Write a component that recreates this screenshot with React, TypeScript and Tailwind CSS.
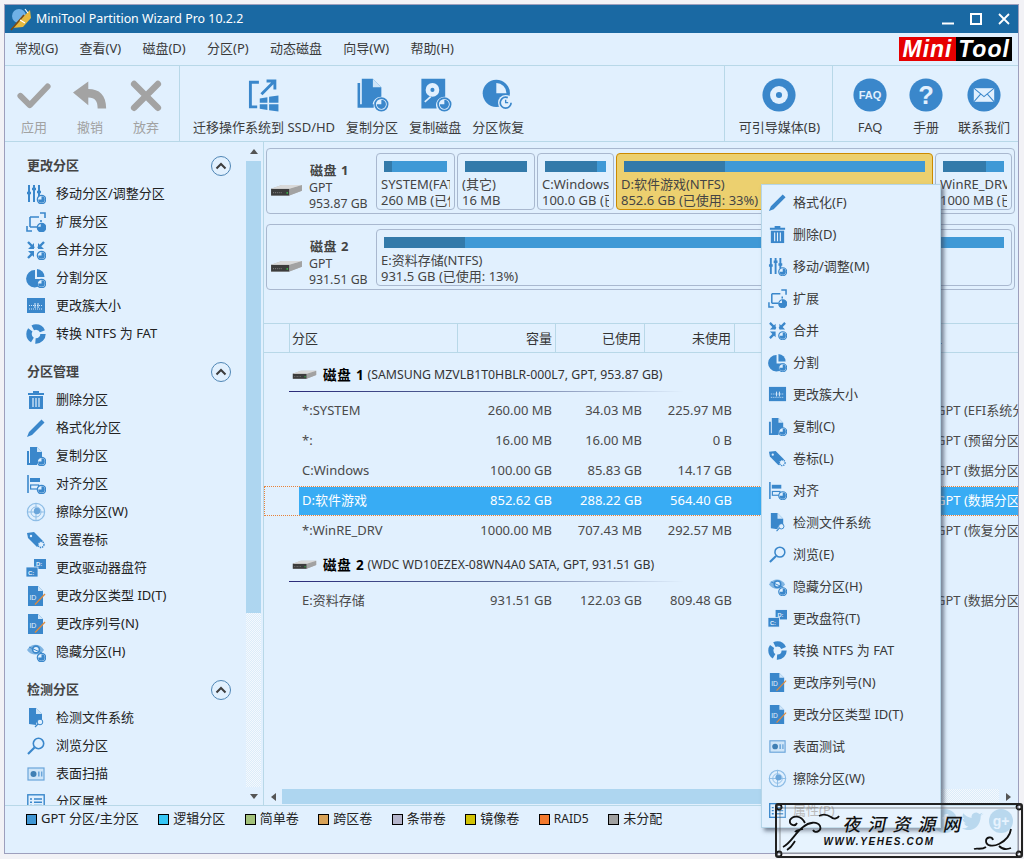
import React from 'react';

const B = '#3a87cb';

function Badge() {
  return (
    <g>
      <circle cx="15.5" cy="15.5" r="4.2" fill="#e1f0fe" stroke={B} strokeWidth="1.2" />
      <path d="M15.5 15.5V12.2A3.3 3.3 0 1 1 12.2 15.5Z" fill={B} />
    </g>
  );
}

function Icon({ name, size = 20 }: { name: string; size?: number }) {
  let body: React.ReactNode = null;
  switch (name) {
    case 'sliders':
      body = (
        <g>
          <path d="M3 1v17M8 1v17M13 1v11" stroke={B} strokeWidth="2" />
          <path d="M1 9h4M6 5h4M11 8h4" stroke={B} strokeWidth="2.6" />
          <Badge />
        </g>
      );
      break;
    case 'expand':
      body = (
        <g fill="none" stroke={B} strokeWidth="1.6">
          <path d="M4 5h9M4 5v10M4 15h7M15 8v2" />
          <path d="M14 1h5v5M1 14v5h5" />
          <Badge />
        </g>
      );
      break;
    case 'merge':
      body = (
        <g>
          <path d="M2 2l6 6M18 2l-6 6M2 18l5-5" stroke={B} strokeWidth="2.4" />
          <path d="M8 3v6H2zM12 3v6h6zM8 17v-6H2z" fill={B} />
          <Badge />
        </g>
      );
      break;
    case 'pie':
      body = (
        <g>
          <path d="M9 2v9h8.5A8.7 8.7 0 1 1 9 2Z" fill={B} />
          <path d="M11 1a8 8 0 0 1 7.5 8H11Z" fill={B} />
          <Badge />
        </g>
      );
      break;
    case 'cluster':
      body = (
        <g>
          <rect x="1" y="2" width="18" height="15" fill={B} />
          <path d="M3 9.5h14M3 13h14" stroke="#cfe5f8" strokeWidth="1" strokeDasharray="1 1" />
          <path d="M9 7v5M12 7v5" stroke="#e1f0fe" strokeWidth="1" />
        </g>
      );
      break;
    case 'recycle':
      body = (
        <g>
          <circle cx="10" cy="10" r="7" fill="none" stroke={B} strokeWidth="5.4" strokeDasharray="11.5 3.2" />
          <path d="M10 7l3 5H7z" fill="#e1f0fe" />
        </g>
      );
      break;
    case 'trash':
      body = (
        <g>
          <path d="M7 1h6v2h5v2H2V3h5z" fill={B} />
          <path d="M3 6h14v13H3z" fill={B} />
          <path d="M7 8v9M10 8v9M13 8v9" stroke="#e1f0fe" strokeWidth="1.2" />
        </g>
      );
      break;
    case 'pencil':
      body = <path d="M15.5 1.5l3 3L6 17l-5 2 2-5zM14 3l3 3" fill={B} />;
      break;
    case 'copy':
      body = (
        <g>
          <path d="M4 1h7l5 5v6a5 5 0 0 0-5 6H4z" fill={B} />
          <path d="M1 5h2v12h8v2H1z" fill={B} />
          <path d="M11 1v5h5" fill="#cfe5f8" />
          <Badge />
        </g>
      );
      break;
    case 'align':
      body = (
        <g>
          <path d="M2 1v18" stroke={B} strokeWidth="1.6" />
          <rect x="4" y="4" width="10" height="4" fill={B} />
          <rect x="4.6" y="11" width="8" height="4" fill="none" stroke={B} strokeWidth="1.2" />
          <Badge />
        </g>
      );
      break;
    case 'wipe':
      body = (
        <g fill="none" stroke="#8dbde6">
          <circle cx="10" cy="10" r="8.6" strokeWidth="1.2" />
          <circle cx="10" cy="10" r="5" />
          <path d="M1 10h18M10 1v18" />
          <circle cx="11" cy="9" r="3.2" fill="#6aa5da" stroke="none" />
        </g>
      );
      break;
    case 'tag':
      body = (
        <g>
          <path d="M1 3l7-1 9 9-6 6-9-9z" fill={B} />
          <circle cx="5" cy="6" r="1.2" fill="#e1f0fe" />
          <circle cx="15" cy="14.5" r="3" fill="#e1f0fe" stroke={B} strokeWidth="1.4" strokeDasharray="1.4 .8" />
        </g>
      );
      break;
    case 'drive':
      body = (
        <g>
          <rect x="8" y="1" width="12" height="10" fill={B} />
          <rect x="0" y="9" width="12" height="10" fill={B} stroke="#e1f0fe" strokeWidth=".8" />
          <text x="10" y="8" fontSize="6" fontWeight="700" fill="#e1f0fe" fontFamily="Liberation Sans">D:</text>
          <text x="2" y="16.5" fontSize="6" fontWeight="700" fill="#e1f0fe" fontFamily="Liberation Sans">C:</text>
        </g>
      );
      break;
    case 'id':
      body = (
        <g>
          <path d="M2 0h10l5 5v15H2z" fill={B} />
          <path d="M12 0v5h5z" fill="#cfe5f8" />
          <text x="3.4" y="14" fontSize="7" fill="#e1f0fe" fontFamily="Liberation Sans">ID</text>
          <path d="M9 18.5L19 8" stroke="#e08a3c" strokeWidth="1.3" />
        </g>
      );
      break;
    case 'eye':
      body = (
        <g>
          <path d="M1 8c4-7 13-7 17 0-4 6-13 6-17 0z" fill="#7fb4e2" />
          <circle cx="10" cy="7.5" r="3.4" fill="#e1f0fe" stroke={B} strokeWidth="1.6" />
          <path d="M3 5l13 6" stroke={B} strokeWidth="1" />
          <Badge />
        </g>
      );
      break;
    case 'docsearch':
      body = (
        <g>
          <path d="M3 0h7l6 6v6a5 5 0 0 0-6 5l-7-1z" fill={B} />
          <path d="M10 0v6h6z" fill="#cfe5f8" />
          <circle cx="14" cy="14" r="2.8" fill="#e1f0fe" stroke={B} />
          <path d="M12 16l-3 3" stroke={B} strokeWidth="1.2" />
        </g>
      );
      break;
    case 'search':
      body = (
        <g fill="none" stroke={B}>
          <circle cx="12.5" cy="7.5" r="5.2" strokeWidth="1.6" />
          <path d="M8.5 11.5L2 18" strokeWidth="2.2" />
        </g>
      );
      break;
    case 'surface':
      body = (
        <g>
          <rect x="2" y="4" width="16" height="12" fill="#cfe5f8" stroke="#6aa5da" strokeWidth="1.2" />
          <circle cx="7.5" cy="10" r="3" fill="#3f7fb4" />
          <path d="M12 7.5h1.6v5H12zM15 7.5h1.4v5H15z" fill="#6aa5da" />
        </g>
      );
      break;
    case 'props':
      body = (
        <g>
          <rect x="1.8" y="2.8" width="16.4" height="14.4" fill="none" stroke={B} strokeWidth="1.4" />
          <path d="M4 7h2M8 7h8M4 10.2h2M8 10.2h8M4 13.4h2M8 13.4h8" stroke={B} strokeWidth="1.4" />
        </g>
      );
      break;
  }
  return (
    <svg width={size} height={size} viewBox="0 0 20 20" className="shrink-0">
      {body}
    </svg>
  );
}

function ToolIcon({ name }: { name: string }) {
  const g = '#a3a3a3';
  let body: React.ReactNode = null;
  const clock = (
    <g>
      <circle cx="31" cy="31" r="7.4" fill="#e1f0fe" stroke={B} strokeWidth="2" />
      <path d="M31 31v-5.4A5.4 5.4 0 1 1 25.6 31Z" fill={B} />
    </g>
  );
  switch (name) {
    case 'apply':
      body = <path d="M4 21l11 11L36 10" fill="none" stroke={g} strokeWidth="7" strokeLinecap="round" strokeLinejoin="round" />;
      break;
    case 'undo':
      body = <path d="M0 17L18 4v9c13 0 21 7 21 23H29c0-9-3-13-11-13v9z" fill={g} />;
      break;
    case 'discard':
      body = <path d="M6 7l28 28M34 7L6 35" stroke={g} strokeWidth="7.5" strokeLinecap="round" />;
      break;
    case 'migrate':
      body = (
        <g>
          <path d="M14 5H4v29h8" fill="none" stroke={B} strokeWidth="3.4" />
          <path d="M17 19L31 5M23 3.6h9.8v9.8" fill="none" stroke={B} strokeWidth="3.4" />
          <path d="M15 24l9-1.4V29h-9zM26 22.2l11-1.7V29H26zM15 31h9v6.5l-9-1.3zM26 31h11v8.5l-11-1.6z" fill={B} />
        </g>
      );
      break;
    case 'copyPart':
      body = (
        <g>
          <path d="M8 1h13l10 10v11a10 10 0 0 0-10 12H8z" fill={B} />
          <path d="M21 1v10h10z" fill="#cfe5f8" />
          <path d="M3 6h3v25h16v4H3z" fill={B} />
          {clock}
        </g>
      );
      break;
    case 'copyDisk':
      body = (
        <g>
          <path d="M4 1h28v21a10 10 0 0 0-10 14H4z" fill={B} />
          <circle cx="17" cy="14" r="8" fill="#e1f0fe" />
          <circle cx="17" cy="14" r="2.4" fill={B} />
          <path d="M8 28l7-6" stroke="#e1f0fe" strokeWidth="2" />
          {clock}
        </g>
      );
      break;
    case 'restore':
      body = (
        <g>
          <circle cx="18" cy="18" r="16" fill={B} />
          <path d="M18 6v12h12A12 12 0 0 0 18 6Z" fill="#e1f0fe" />
          <circle cx="29" cy="29" r="9" fill="#e1f0fe" />
          <circle cx="29" cy="29" r="6.4" fill="none" stroke={B} strokeWidth="2" strokeDasharray="32 8" />
          <path d="M29 25.5V29h3" fill="none" stroke={B} strokeWidth="1.6" />
        </g>
      );
      break;
    case 'media':
      body = (
        <g>
          <circle cx="20" cy="20" r="19.5" fill={B} />
          <circle cx="20" cy="20" r="10.5" fill="#e1f0fe" />
          <circle cx="20" cy="20" r="3.6" fill={B} />
        </g>
      );
      break;
    case 'faq':
      body = (
        <g>
          <circle cx="20" cy="20" r="19.5" fill={B} />
          <text x="20" y="24.5" textAnchor="middle" fontSize="13" fontWeight="700" fill="#e1f0fe" fontFamily="Liberation Sans">FAQ</text>
        </g>
      );
      break;
    case 'help':
      body = (
        <g>
          <circle cx="20" cy="20" r="19.5" fill={B} />
          <text x="20" y="31" textAnchor="middle" fontSize="30" fontWeight="700" fill="#e1f0fe" fontFamily="Liberation Sans">?</text>
        </g>
      );
      break;
    case 'mail':
      body = (
        <g>
          <circle cx="20" cy="20" r="19.5" fill={B} />
          <rect x="8" y="12" width="24" height="16" fill="#e1f0fe" />
          <path d="M8 12l12 10 12-10M8 28l8-9M32 28l-8-9" fill="none" stroke={B} strokeWidth="1.2" />
        </g>
      );
      break;
  }
  return (
    <svg width="34" height="34" viewBox="0 0 40 40" className="shrink-0">
      {body}
    </svg>
  );
}

function Hdd({ w = 34 }: { w?: number }) {
  return (
    <svg width={w} height={w * 0.38} viewBox="0 0 34 13" className="shrink-0">
      <path d="M1 5L12 1h21v6L20 12H1z" fill="#b9b9b9" />
      <path d="M1 5h19v7H1z" fill="#3c3c3c" />
      <path d="M20 5L33 1v6L20 12z" fill="#a2a2a2" />
      <path d="M1 5L12 1h21L20 5z" fill="#d9d9d9" />
      <path d="M3 9h9" stroke="#888" strokeDasharray="1 1" />
      <rect x="17" y="8.5" width="1.5" height="1.5" fill="#37d14a" />
    </svg>
  );
}

function Chevron() {
  return (
    <span className="flex h-[20px] w-[20px] items-center justify-center rounded-full border border-[#4f86b5]">
      <svg width="12" height="8" viewBox="0 0 12 8">
        <path d="M1.5 6.5L6 2l4.5 4.5" fill="none" stroke="#3d3d3d" strokeWidth="2" />
      </svg>
    </span>
  );
}

const sections = [
  {
    title: '更改分区',
    items: [
      ['sliders', '移动分区/调整分区'],
      ['expand', '扩展分区'],
      ['merge', '合并分区'],
      ['pie', '分割分区'],
      ['cluster', '更改簇大小'],
      ['recycle', '转换 NTFS 为 FAT'],
    ],
  },
  {
    title: '分区管理',
    items: [
      ['trash', '删除分区'],
      ['pencil', '格式化分区'],
      ['copy', '复制分区'],
      ['align', '对齐分区'],
      ['wipe', '擦除分区(W)'],
      ['tag', '设置卷标'],
      ['drive', '更改驱动器盘符'],
      ['id', '更改分区类型 ID(T)'],
      ['id', '更改序列号(N)'],
      ['eye', '隐藏分区(H)'],
    ],
  },
  {
    title: '检测分区',
    items: [
      ['docsearch', '检测文件系统'],
      ['search', '浏览分区'],
      ['surface', '表面扫描'],
      ['props', '分区属性'],
    ],
  },
];

const menuItems = [
  ['pencil', '格式化(F)'],
  ['trash', '删除(D)'],
  ['sliders', '移动/调整(M)'],
  ['expand', '扩展'],
  ['merge', '合并'],
  ['pie', '分割'],
  ['cluster', '更改簇大小'],
  ['copy', '复制(C)'],
  ['tag', '卷标(L)'],
  ['align', '对齐'],
  ['docsearch', '检测文件系统'],
  ['search', '浏览(E)'],
  ['eye', '隐藏分区(H)'],
  ['drive', '更改盘符(T)'],
  ['recycle', '转换 NTFS 为 FAT'],
  ['id', '更改序列号(N)'],
  ['id', '更改分区类型 ID(T)'],
  ['surface', '表面测试'],
  ['wipe', '擦除分区(W)'],
  ['props', '属性(P)'],
];

const legend = [
  ['bg-[#3f96d4]', 'GPT 分区/主分区'],
  ['bg-[#35c6f5]', '逻辑分区'],
  ['bg-[#a3c27a]', '简单卷'],
  ['bg-[#d8a257]', '跨区卷'],
  ['bg-[#b5b5cb]', '条带卷'],
  ['bg-[#d2c305]', '镜像卷'],
  ['bg-[#f47a2e]', 'RAID5'],
  ['bg-[#a0a0a0]', '未分配'],
];

function ToolItem({ icon, label, muted, className = '' }: { icon: string; label: string; muted?: boolean; className?: string }) {
  return (
    <div className={`flex flex-col items-center pt-[12px] ${className}`}>
      <ToolIcon name={icon} />
      <span className={`mt-[6px] whitespace-nowrap text-[13px] leading-[18px] ${muted ? 'text-[#a2a2a2]' : 'text-[#3c3c3c]'}`}>{label}</span>
    </div>
  );
}

function Part({
  label,
  sub,
  used,
  className,
  selected,
}: {
  label: string;
  sub: string;
  used: string;
  className: string;
  selected?: boolean;
}) {
  return (
    <div
      className={`h-[57px] rounded-[4px] border px-[4px] pt-[7px] ${className} ${
        selected ? 'border-[#cc8a00] bg-[#ecd06f]' : 'border-[#a9b8cf] bg-[#e1f0fe]'
      }`}
    >
      <div className="mx-[3px] h-[11px] bg-[#3f99d6]">
        <div className={`h-full bg-[#337aaa] ${used}`} />
      </div>
      <div className="mt-[4px] overflow-hidden whitespace-nowrap text-[13px] leading-[16px] text-[#444]">{label}</div>
      <div className="overflow-hidden whitespace-nowrap text-[13px] leading-[16px] text-[#444]">{sub}</div>
    </div>
  );
}

function DiskInfo({ name, size }: { name: string; size: string }) {
  return (
    <div className="flex w-[109px] shrink-0 pl-[3px] pt-[9px]">
      <div className="mt-[22px] w-[39px]">
        <Hdd w={33} />
      </div>
      <div className="text-[#444]">
        <div className="ml-px text-[13px] font-bold leading-[16px] tracking-[0.5px]">{name}</div>
        <div className="mt-[2px] text-[12.3px] leading-[16px]">GPT</div>
        <div className="whitespace-nowrap text-[12.3px] leading-[16px]">{size}</div>
      </div>
    </div>
  );
}

function DiskRow({ text, name }: { name: string; text: string }) {
  return (
    <div className="relative flex h-[30px] items-center pl-[28px] text-[13px] text-[#333]">
      <Hdd w={25} />
      <span className="ml-[6px] text-[13.5px] font-bold tracking-[0.8px] text-black">{name}</span>
      <span className="ml-[3px] whitespace-nowrap text-[12.3px]">{text}</span>
      <div className="absolute -bottom-[2px] left-[25px] h-px w-[395px] bg-gradient-to-r from-[#2b2a78] via-[#5a6a98] to-transparent" />
    </div>
  );
}

function PartRow({ cells, selected }: { cells: string[]; selected?: boolean }) {
  const text = selected ? 'text-white' : 'text-[#4a4a4a]';
  return (
    <div
      className={`flex h-[30px] items-center text-[13px] ${text} ${
        selected ? 'border border-dotted border-[#e8823a]' : ''
      }`}
    >
      <div className={`flex h-full w-full items-center ${selected ? 'ml-[34px] bg-[#38acf4]' : 'ml-[35px]'}`}>
        <div className="w-[133px] shrink-0 pl-[3px]">{cells[0]}</div>
        <div className="w-[120px] shrink-0 text-right">{cells[1]}</div>
        <div className="w-[90px] shrink-0 text-right">{cells[2]}</div>
        <div className="w-[90px] shrink-0 text-right">{cells[3]}</div>
        <div className="ml-[204px] whitespace-nowrap">{cells[4]}</div>
      </div>
    </div>
  );
}

export default function App() {
  return (
    <div className="relative h-[859px] w-[1024px] overflow-hidden bg-[#f2f2f6] pb-[5px] pl-[4px] pr-[5px] pt-[4px] font-['Noto_Sans','Noto_Sans_CJK_SC',sans-serif]">
      <div className="flex h-full flex-col border border-[#9d9fbd] bg-[#e1f0fe]">
        {/* title bar */}
        <div className="flex h-[28px] shrink-0 items-center bg-[#1a69a3] pl-[5px]">
          <svg width="22" height="24" viewBox="0 0 22 24" className="shrink-0">
            <circle cx="9" cy="9" r="7" fill="#6fb1e6" />
            <path d="M2 21L20 3l1 8-8 9z" fill="#e7b93e" />
            <path d="M1 23L14 8" stroke="#7a4a12" strokeWidth="1.6" />
            <path d="M15 2l3 4M10 13l5 3" stroke="#fff" strokeWidth="1.2" />
          </svg>
          <span className="ml-[4px] whitespace-nowrap text-[12.4px] text-white">MiniTool Partition Wizard Pro 10.2.2</span>
          <div className="ml-auto mr-[8px] flex items-center gap-[16px]">
            <svg width="12" height="12" viewBox="0 0 12 12"><path d="M0 10.5h12" stroke="#fff" strokeWidth="2" /></svg>
            <svg width="12" height="12" viewBox="0 0 12 12"><rect x="1" y="1" width="10" height="10" fill="none" stroke="#fff" strokeWidth="2" /></svg>
            <svg width="12" height="12" viewBox="0 0 12 12"><path d="M1 1l10 10M11 1L1 11" stroke="#fff" strokeWidth="1.8" /></svg>
          </div>
        </div>

        {/* menu bar */}
        <div className="flex h-[33px] shrink-0 items-center gap-[21.3px] border-b border-[#b8d8e8] pl-[10px] text-[13px] text-[#3a3a3a]">
          <span>常规(G)</span>
          <span>查看(V)</span>
          <span>磁盘(D)</span>
          <span>分区(P)</span>
          <span>动态磁盘</span>
          <span>向导(W)</span>
          <span>帮助(H)</span>
          <div className="ml-auto mr-[6px] flex h-[24px] w-[113px] overflow-hidden font-['Liberation_Sans',sans-serif] text-[23px] font-bold italic leading-[24px] tracking-[1px] text-white">
            <span className="w-[57px] bg-[#e60000] text-center">Mini</span>
            <span className="w-[56px] bg-black text-center">Tool</span>
          </div>
        </div>

        {/* toolbar */}
        <div className="flex h-[76px] shrink-0 border-b border-[#b8d8e8]">
          <div className="flex w-[175px] shrink-0 border-r border-[#b8d8e8] pl-px">
            <ToolItem className="w-[56px]" icon="apply" label="应用" muted />
            <ToolItem className="w-[56px]" icon="undo" label="撤销" muted />
            <ToolItem className="w-[56px]" icon="discard" label="放弃" muted />
          </div>
          <div className="flex w-[545px] shrink-0 gap-[11px] border-r border-[#b8d8e8] pl-[13px]">
            <ToolItem icon="migrate" label="迁移操作系统到 SSD/HD" />
            <ToolItem icon="copyPart" label="复制分区" />
            <ToolItem icon="copyDisk" label="复制磁盘" />
            <ToolItem icon="restore" label="分区恢复" />
          </div>
          <div className="flex w-[108px] shrink-0 justify-center border-r border-[#b8d8e8] pl-[2px]">
            <ToolItem icon="media" label="可引导媒体(B)" />
          </div>
          <div className="flex flex-1 pl-[9px]">
            <ToolItem className="w-[56px]" icon="faq" label="FAQ" />
            <ToolItem className="w-[56px]" icon="help" label="手册" />
            <ToolItem className="ml-[2px] w-[56px]" icon="mail" label="联系我们" />
          </div>
        </div>

        {/* main */}
        <div className="flex min-h-0 flex-1">
          {/* sidebar */}
          <div className="flex w-[258px] shrink-0 pr-[2px]">
            <div className="min-w-0 flex-1 overflow-hidden pt-[10px]">
              {sections.map((s) => (
                <div key={s.title} className="mb-[10px]">
                  <div className="flex h-[28px] items-center justify-between pl-[22px] pr-[15px]">
                    <span className="text-[13px] font-bold text-[#444]">{s.title}</span>
                    <Chevron />
                  </div>
                  {s.items.map(([icon, label]) => (
                    <div key={label} className="flex h-[28px] items-center pl-[21px] text-[13px] text-[#222]">
                      <Icon name={icon} size={20} />
                      <span className="ml-[10px] whitespace-nowrap">{label}</span>
                    </div>
                  ))}
                </div>
              ))}
            </div>
            <div className="flex w-[15px] shrink-0 flex-col items-center">
              <div className="flex h-[19px] shrink-0 items-center justify-center">
                <div className="h-0 w-0 border-x-[4px] border-b-[5px] border-x-transparent border-b-[#555]" />
              </div>
              <div className="h-[452px] w-full shrink-0 bg-[#aed6f0]" />
              <div className="w-full flex-1 bg-[repeating-conic-gradient(#f4f9fe_0_25%,#dcecf9_0_50%)] bg-[length:2px_2px]" />
              <div className="flex h-[18px] shrink-0 items-center justify-center">
                <div className="h-0 w-0 border-x-[4px] border-t-[5px] border-x-transparent border-t-[#555]" />
              </div>
            </div>
          </div>

          {/* content */}
          <div className="flex min-w-0 flex-1 flex-col border-l border-[#b8d8e8]">
            <div className="h-[181px] shrink-0 pl-[2px] pr-[3px] pt-[6px]">
              <div className="flex h-[66px] rounded-[4px] border border-[#a9b8cf] py-[4px] pr-[2px]">
                <DiskInfo name="磁盘 1" size="953.87 GB" />
                <div className="flex min-w-0 flex-1 gap-[2px]">
                  <Part className="w-[79px]" label="SYSTEM(FAT32)" sub="260 MB (已使用: 13%)" used="w-[13%]" />
                  <Part className="w-[78px]" label="(其它)" sub="16 MB" used="w-full" />
                  <Part className="w-[77px]" label="C:Windows(NTFS)" sub="100.0 GB (已使用: 85%)" used="w-[86%]" />
                  <Part className="w-[317px]" label="D:软件游戏(NTFS)" sub="852.6 GB (已使用: 33%)" used="w-[33.7%]" selected />
                  <Part className="min-w-0 flex-1" label="WinRE_DRV(NTFS)" sub="1000 MB (已使用: 70%)" used="w-[71%]" />
                </div>
              </div>
              <div className="mt-[10px] flex h-[66px] rounded-[4px] border border-[#a9b8cf] py-[4px] pr-[2px]">
                <DiskInfo name="磁盘 2" size="931.51 GB" />
                <Part className="min-w-0 flex-1" label="E:资料存储(NTFS)" sub="931.5 GB (已使用: 13%)" used="w-[13%]" />
              </div>
            </div>

            {/* table */}
            <div className="flex h-[30px] shrink-0 items-stretch border-y border-[#b8d8e8] pt-[2px] text-[13px] text-[#333]">
              <div className="-mt-[2px] w-[26px] border-r border-[#b8d8e8]" />
              <div className="-mt-[2px] flex w-[168px] items-center border-r border-[#b8d8e8] pl-[2px] pt-[2px]">分区</div>
              <div className="-mt-[2px] flex w-[98px] items-center justify-end border-r border-[#b8d8e8] pr-[3px] pt-[2px]">容量</div>
              <div className="-mt-[2px] flex w-[89px] items-center justify-end border-r border-[#b8d8e8] pr-[3px] pt-[2px]">已使用</div>
              <div className="-mt-[2px] flex w-[90px] items-center justify-end border-r border-[#b8d8e8] pr-[3px] pt-[2px]">未使用</div>
              <div className="flex w-[207px] items-center justify-end overflow-hidden">类型</div>
            </div>
            <div className="min-h-0 flex-1 overflow-hidden pt-[6px]">
              <div className="h-px" />
              <DiskRow name="磁盘 1" text="(SAMSUNG MZVLB1T0HBLR-000L7, GPT, 953.87 GB)" />
              <div className="h-[6px]" />
              <PartRow cells={['*:SYSTEM', '260.00 MB', '34.03 MB', '225.97 MB', 'GPT (EFI系统分区)']} />
              <PartRow cells={['*:', '16.00 MB', '16.00 MB', '0 B', 'GPT (预留分区)']} />
              <PartRow cells={['C:Windows', '100.00 GB', '85.83 GB', '14.17 GB', 'GPT (数据分区)']} />
              <PartRow cells={['D:软件游戏', '852.62 GB', '288.22 GB', '564.40 GB', 'GPT (数据分区)']} selected />
              <PartRow cells={['*:WinRE_DRV', '1000.00 MB', '707.43 MB', '292.57 MB', 'GPT (恢复分区)']} />
              <div className="h-[4px]" />
              <DiskRow name="磁盘 2" text="(WDC WD10EZEX-08WN4A0 SATA, GPT, 931.51 GB)" />
              <div className="h-[6px]" />
              <PartRow cells={['E:资料存储', '931.51 GB', '122.03 GB', '809.48 GB', 'GPT (数据分区)']} />
            </div>
            <div className="mb-px flex h-[15px] shrink-0 items-center">
              <div className="flex w-[18px] shrink-0 justify-center">
                <div className="h-0 w-0 border-y-[4px] border-r-[5px] border-y-transparent border-r-[#555]" />
              </div>
              <div className="h-full w-[600px] shrink-0 bg-[#aed6f0]" />
              <div className="h-full flex-1 bg-[repeating-conic-gradient(#f4f9fe_0_25%,#dcecf9_0_50%)] bg-[length:2px_2px]" />
              <div className="flex w-[19px] shrink-0 justify-center">
                <div className="h-0 w-0 border-y-[4px] border-l-[5px] border-y-transparent border-l-[#555]" />
              </div>
            </div>
          </div>
        </div>

        {/* legend */}
        <div className="flex h-[48px] shrink-0 items-start gap-[19.5px] border-t border-[#b8d8e8] pl-[21px] pt-[3px] text-[13px] text-[#222]">
          {legend.map(([color, label]) => (
            <div key={label} className="flex h-[20px] items-center">
              <span className={`h-[11px] w-[11px] border border-black ${color}`} />
              <span className={`ml-[4px] whitespace-nowrap ${label === 'RAID5' ? 'text-[12px]' : ''}`}>{label}</span>
            </div>
          ))}
          <div className="ml-auto mr-[5px] flex items-center gap-[5px]">
            <span className="flex h-[24px] w-[24px] items-center justify-center rounded-full bg-[#a8cfea] font-['Liberation_Sans',sans-serif] text-[18px] font-bold text-[#e1f0fe]">f</span>
            <svg width="22" height="22" viewBox="0 0 24 24">
              <path d="M23 5c-1 .5-2 .7-3 .8 1-.6 2-1.6 2.2-2.7-1 .6-2 1-3.200 1.200a5 5 0 0 0-8.500 4.500C6.500 8 3 6 1.500 3.500c-1.500 2.500-.7 5 1.300 6.500-.8 0-1.500-.2-2.200-.6 0 2.500 1.700 4.500 4 5-.7.2-1.500.2-2.200 0 .6 2 2.500 3.400 4.600 3.500-2 1.600-4.500 2.300-7 2 7 4.400 20 2 20.500-13.700 1-.7 2-1.700 2.500-2.200z" fill="#a8cfea" />
            </svg>
            <span className="flex h-[24px] w-[24px] items-center justify-center rounded-full bg-[#a8cfea] font-['Liberation_Sans',sans-serif] text-[14px] font-bold text-[#e1f0fe]">g+</span>
          </div>
        </div>
      </div>

      {/* context menu */}
      <div className="absolute left-[761px] top-[184px] h-[644px] w-[180px] border border-[#b5d5e8] bg-[#e1f0fe] py-[1px] shadow-[3px_3px_4px_rgba(60,70,90,0.65)]">
        {menuItems.map(([icon, label]) => (
          <div key={label} className="flex h-[32px] items-center pl-[6px] pt-[1px] text-[13px] text-[#3a3a3a]">
            <Icon name={icon} size={19} />
            <span className={`ml-[6px] whitespace-nowrap ${label === '属性(P)' ? 'text-[#aaa]' : ''}`}>{label}</span>
          </div>
        ))}
      </div>

      {/* watermark */}
      <div className="absolute left-[775px] top-[803px] flex h-[55px] w-[248px] flex-col items-center overflow-hidden rounded-[3px] border-2 border-[#222] bg-white/20">
        <svg width="248" height="55" viewBox="0 0 248 55" className="absolute -left-[2px] -top-[2px]">
          <g fill="none" stroke="#111" strokeWidth="1.8">
            <path d="M8 44c8-4 12-14 20-20 6-5 14-6 17-1 2 5-5 8-7 4M30 20c-4-8-12-8-15-3-1 5 5 7 7 3M44 13c5-3 9-1 12 1 3 3 7 1 8-1M20 38c-2 3-3 6-8 9M28 26c-3 1-6 0-8 3" />
            <path d="M236 26c-1 7-6 12-12 15-6 3-13 2-13-3 0-4 6-5 7-1M211 44c-4 3-9 1-12 2M224 43c3 3 7 4 12 2" />
            <circle cx="4" cy="4" r="2.5" />
            <circle cx="244" cy="4" r="2.5" />
            <circle cx="4" cy="51" r="2.5" />
            <circle cx="244" cy="51" r="2.5" />
          </g>
          <rect x="5" y="5" width="238" height="45" fill="none" stroke="#555" strokeWidth=".6" />
        </svg>
        <span className="relative ml-[14px] mt-[7px] -skew-x-12 text-[18px] font-medium leading-[24px] tracking-[7px] text-[#111]">夜河资源网</span>
        <span className="relative -ml-[40px] font-['Liberation_Sans',sans-serif] text-[10px] font-bold italic leading-[12px] tracking-[1.6px] text-[#111]">WWW.YEHES.COM</span>
      </div>
    </div>
  );
}
